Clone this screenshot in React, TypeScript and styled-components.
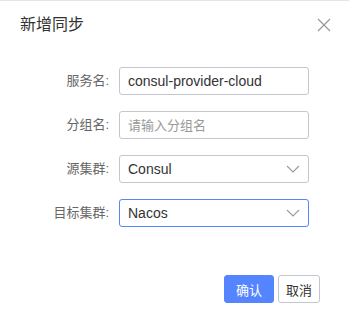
import * as React from "react";
import styled, { createGlobalStyle } from "styled-components";

const GlobalStyle = createGlobalStyle`
  html, body {
    margin: 0;
    padding: 0;
    background: #fff;
  }
  body {
    font-family: "Liberation Sans", "Noto Sans CJK SC", sans-serif;
  }
`;

const Dialog = styled.div`
  width: 349px;
  height: 315px;
  box-sizing: border-box;
  border-top: 1px solid #e4e5ea;
  display: flex;
  flex-direction: column;
  background: #fff;
`;

const Header = styled.div`
  display: flex;
  align-items: center;
  justify-content: space-between;
  padding: 12px 18px 0 20px;
  height: 24px;
`;

const Title = styled.div`
  font-size: 16px;
  line-height: 24px;
  color: #333;
`;

const CloseButton = styled.button`
  border: none;
  background: transparent;
  padding: 0;
  width: 14px;
  height: 14px;
  display: flex;
  align-items: center;
  justify-content: center;
  cursor: pointer;
`;

const Form = styled.div`
  display: grid;
  grid-template-columns: 109px 190px;
  column-gap: 10px;
  row-gap: 16px;
  margin-top: 30px;
`;

const Label = styled.label`
  font-size: 13px;
  line-height: 28px;
  color: #666;
  text-align: right;
`;

const Field = styled.div<{ $focused?: boolean }>`
  box-sizing: border-box;
  height: 28px;
  border: 1px solid ${(p) => (p.$focused ? "#5584ff" : "#c4c6cf")};
  border-radius: 3px;
  display: flex;
  align-items: center;
  padding: 0 8px;
  background: #fff;
`;

const Input = styled.input`
  border: none;
  outline: none;
  flex: 1;
  min-width: 0;
  padding: 0;
  font-family: inherit;
  font-size: 14px;
  color: #333;
  background: transparent;
  &::placeholder {
    color: #999;
    font-size: 13px;
  }
`;

const SelectValue = styled.span`
  flex: 1;
  font-size: 14px;
  color: #333;
`;

const Footer = styled.div`
  margin-top: auto;
  display: flex;
  justify-content: flex-end;
  gap: 4px;
  padding: 0 29px 12px 0;
`;

const Button = styled.button<{ $primary?: boolean }>`
  box-sizing: border-box;
  height: 28px;
  padding: 0 ${(p) => (p.$primary ? "11px" : "7px")};
  border-radius: 3px;
  font-family: inherit;
  font-size: 13px;
  cursor: pointer;
  border: 1px solid ${(p) => (p.$primary ? "#5584ff" : "#c4c6cf")};
  background: ${(p) => (p.$primary ? "#5584ff" : "#fff")};
  color: ${(p) => (p.$primary ? "#fff" : "#333")};
`;

function CloseIcon() {
  return (
    <svg width="14" height="14" viewBox="0 0 14 14">
      <path d="M1 1L13 13M13 1L1 13" stroke="#999" strokeWidth="1.2" fill="none" />
    </svg>
  );
}

function Chevron() {
  return (
    <svg width="14" height="8" viewBox="0 0 14 8">
      <path d="M1 1L7 7L13 1" stroke="#999" strokeWidth="1.1" fill="none" />
    </svg>
  );
}

export default function App() {
  return (
    <>
      <GlobalStyle />
      <Dialog>
        <Header>
          <Title>新增同步</Title>
          <CloseButton aria-label="close">
            <CloseIcon />
          </CloseButton>
        </Header>
        <Form>
          <Label>服务名:</Label>
          <Field>
            <Input defaultValue="consul-provider-cloud" />
          </Field>
          <Label>分组名:</Label>
          <Field>
            <Input placeholder="请输入分组名" />
          </Field>
          <Label>源集群:</Label>
          <Field>
            <SelectValue>Consul</SelectValue>
            <Chevron />
          </Field>
          <Label>目标集群:</Label>
          <Field $focused>
            <SelectValue>Nacos</SelectValue>
            <Chevron />
          </Field>
        </Form>
        <Footer>
          <Button $primary>确认</Button>
          <Button>取消</Button>
        </Footer>
      </Dialog>
    </>
  );
}
